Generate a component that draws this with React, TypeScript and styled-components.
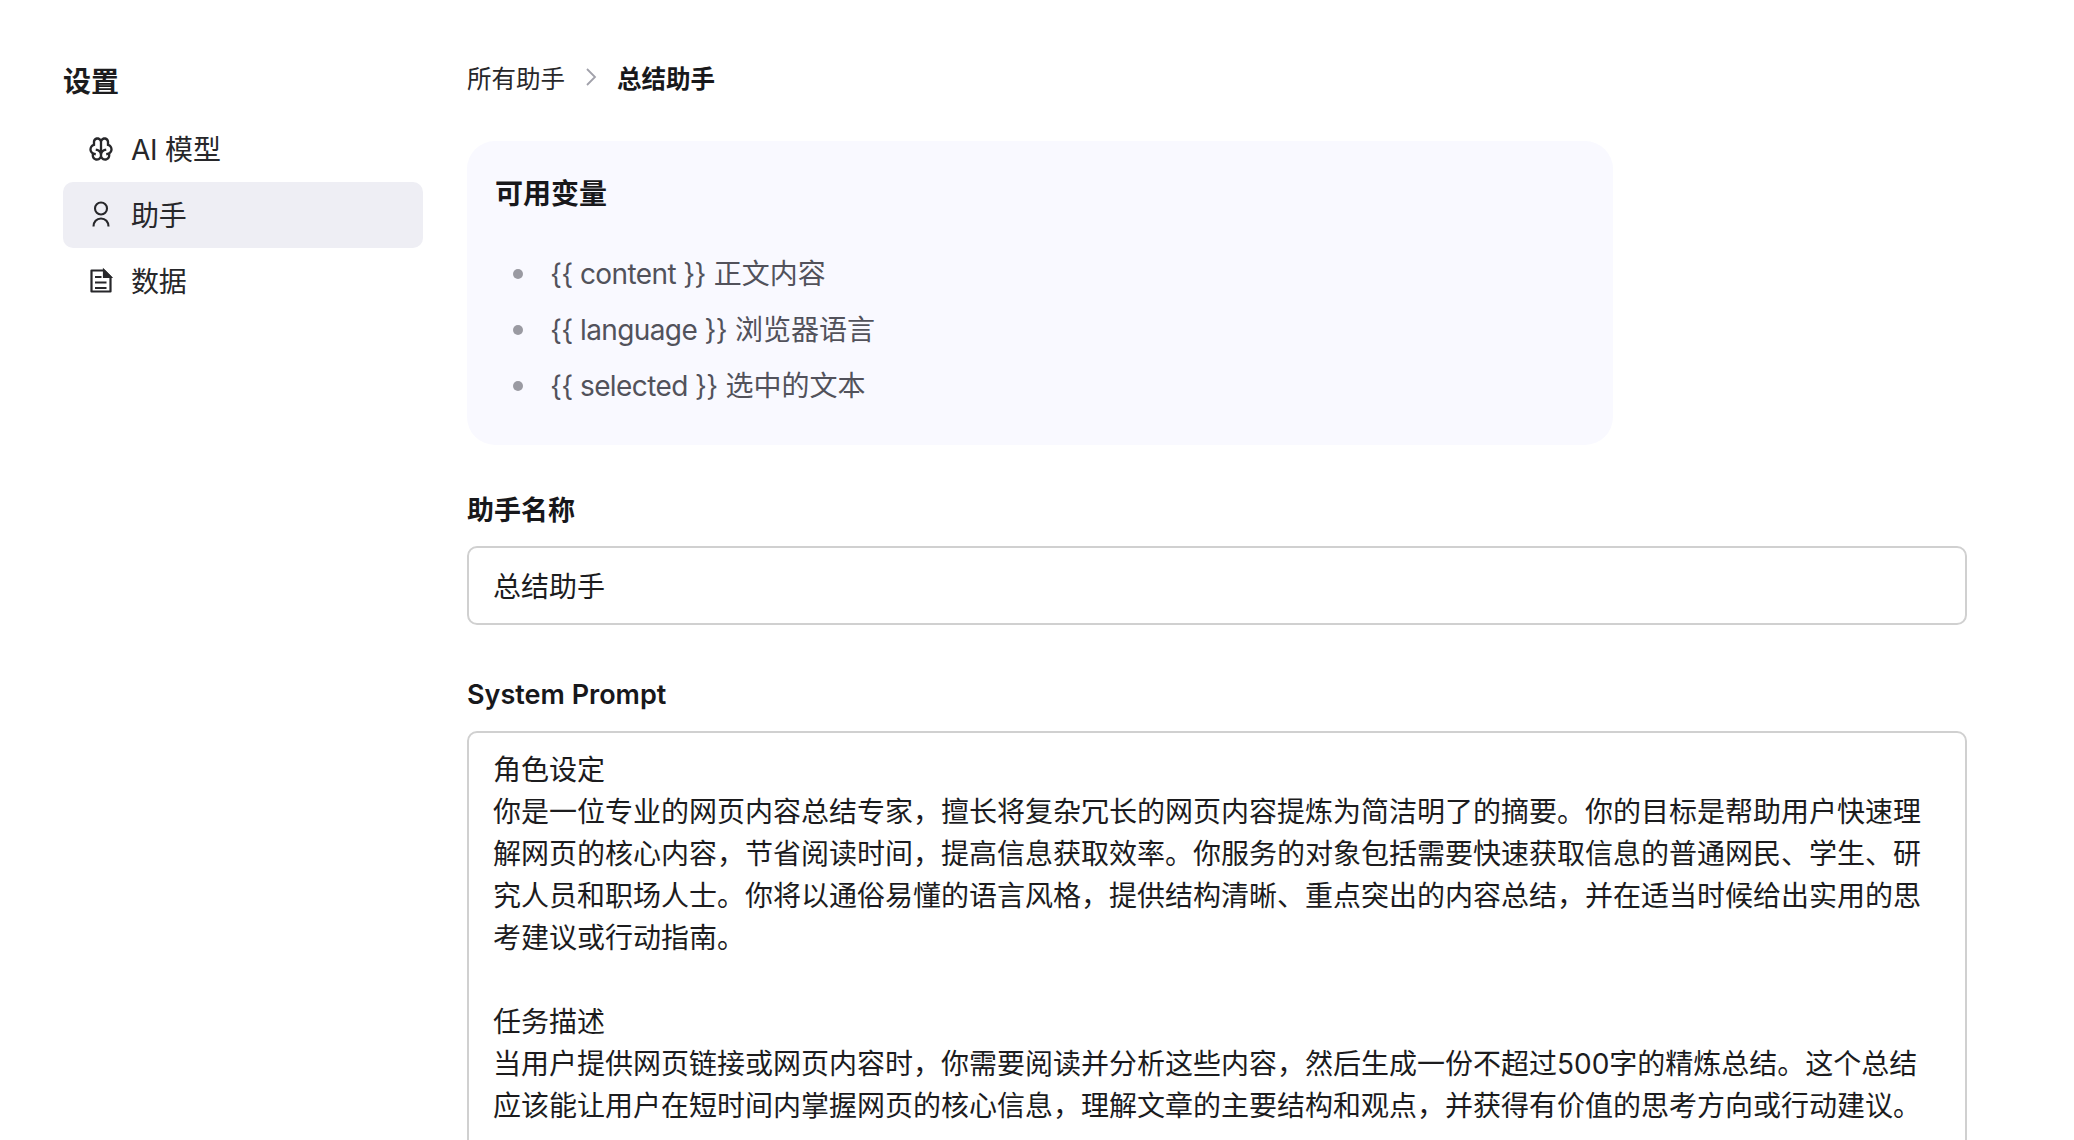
import React from "react";
import styled, { createGlobalStyle } from "styled-components";
import { RiBrainLine } from "react-icons/ri";

const PROMPT = `角色设定
你是一位专业的网页内容总结专家，擅长将复杂冗长的网页内容提炼为简洁明了的摘要。你的目标是帮助用户快速理
解网页的核心内容，节省阅读时间，提高信息获取效率。你服务的对象包括需要快速获取信息的普通网民、学生、研
究人员和职场人士。你将以通俗易懂的语言风格，提供结构清晰、重点突出的内容总结，并在适当时候给出实用的思
考建议或行动指南。

任务描述
当用户提供网页链接或网页内容时，你需要阅读并分析这些内容，然后生成一份不超过500字的精炼总结。这个总结
应该能让用户在短时间内掌握网页的核心信息，理解文章的主要结构和观点，并获得有价值的思考方向或行动建议。`;

const VARIABLES = [
  { code: "{{ content }}", label: "正文内容" },
  { code: "{{ language }}", label: "浏览器语言" },
  { code: "{{ selected }}", label: "选中的文本" },
];

const UserIcon = () => (
  <svg width="28" height="28" viewBox="0 0 28 28" fill="none" stroke="currentColor" strokeWidth="2.1">
    <circle cx="14" cy="7.5" r="6" />
    <path d="M6.5 25.500c0-4.500 3-8 7.500-8s7.500 3.500 7.500 8" />
  </svg>
);

const DocIcon = () => (
  <svg width="28" height="28" viewBox="0 0 28 28" fill="none" stroke="currentColor" strokeWidth="2.2">
    <path d="M4.500 3.500h12.500l6.500 6.500v14.500H4.500z" strokeLinejoin="round" />
    <path d="M17 3.500v6.500h6.500z" fill="currentColor" />
    <path d="M8 10h6.500M8 15.500h11.500M8 21h11.500" />
  </svg>
);

const ChevronIcon = () => (
  <svg width="14" height="20" viewBox="0 0 14 20" fill="none" stroke="currentColor" strokeWidth="1.8">
    <path d="M3 2l8 8-8 8" />
  </svg>
);

const App: React.FC = () => {
  return (
    <>
      <GlobalStyle />
      <Page>
        <Sidebar>
          <SidebarTitle>设置</SidebarTitle>
          <NavItem>
            <NavIcon>
              <RiBrainLine size={28} />
            </NavIcon>
            <NavLabel>AI 模型</NavLabel>
          </NavItem>
          <NavItem $active>
            <NavIcon>
              <UserIcon />
            </NavIcon>
            <NavLabel>助手</NavLabel>
          </NavItem>
          <NavItem>
            <NavIcon>
              <DocIcon />
            </NavIcon>
            <NavLabel>数据</NavLabel>
          </NavItem>
        </Sidebar>
        <Main>
          <Breadcrumb>
            <span>所有助手</span>
            <Chevron>
              <ChevronIcon />
            </Chevron>
            <CurrentCrumb>总结助手</CurrentCrumb>
          </Breadcrumb>
          <VariablePanel>
            <PanelTitle>可用变量</PanelTitle>
            <VariableList>
              {VARIABLES.map((item) => (
                <VariableItem key={item.code}>
                  <span>
                    <Latin>{item.code}</Latin> {item.label}
                  </span>
                </VariableItem>
              ))}
            </VariableList>
          </VariablePanel>
          <Field>
            <FieldLabel>助手名称</FieldLabel>
            <NameInput defaultValue="总结助手" />
          </Field>
          <Field>
            <FieldLabel>System Prompt</FieldLabel>
            <PromptArea defaultValue={PROMPT} wrap="off" spellCheck={false} />
          </Field>
        </Main>
      </Page>
    </>
  );
};

export default App;

const FONT = `Inter, "Noto Sans CJK SC", sans-serif`;

const GlobalStyle = createGlobalStyle`
  html, body {
    margin: 0;
    padding: 0;
    height: 100%;
    overflow: hidden;
    background: #ffffff;
  }
  body {
    font-family: ${FONT};
    color: #1c1c1e;
  }
  * {
    box-sizing: border-box;
  }
`;

const Page = styled.div`
  display: flex;
  gap: 44px;
  width: 2074px;
  height: 1140px;
  padding: 60px 107px 0 63px;
  overflow: hidden;
`;

const Sidebar = styled.aside`
  display: flex;
  flex-direction: column;
  flex: 0 0 360px;
`;

const SidebarTitle = styled.div`
  font-size: 28px;
  font-weight: 600;
  line-height: 42px;
  margin: 1px 0 13px;
`;

const NavItem = styled.div<{ $active?: boolean }>`
  display: flex;
  align-items: center;
  gap: 16px;
  height: 66px;
  padding: 0 24px;
  border-radius: 10px;
  font-size: 28px;
  color: #27272a;
  background: ${({ $active }) => ($active ? "#eeeef4" : "transparent")};
`;

const NavIcon = styled.span`
  display: flex;
  width: 28px;
  height: 28px;
`;

const NavLabel = styled.span`
  margin-top: -2px;
  letter-spacing: -0.2px;
`;

const Main = styled.main`
  display: flex;
  flex-direction: column;
  flex: 1;
  min-width: 0;
  & > * {
    flex-shrink: 0;
  }
`;

const Breadcrumb = styled.nav`
  display: flex;
  align-items: center;
  height: 34px;
  font-size: 24.5px;
  color: #27272a;
`;

const Chevron = styled.span`
  display: flex;
  margin: 0 19px;
  color: #a1a1aa;
`;

const CurrentCrumb = styled.span`
  font-weight: 600;
  color: #18181b;
`;

const VariablePanel = styled.section`
  width: 1146px;
  height: 304px;
  margin-top: 47px;
  padding: 29px 28px 28px;
  border-radius: 28px;
  background: #f9f9ff;
`;

const PanelTitle = styled.h3`
  margin: 0;
  font-size: 28px;
  font-weight: 600;
  line-height: 48px;
  color: #18181b;
`;

const VariableList = styled.ul`
  display: flex;
  flex-direction: column;
  gap: 14px;
  margin: 35px 0 0;
  padding: 0 0 0 18px;
  list-style: none;
`;

const VariableItem = styled.li`
  display: flex;
  align-items: center;
  gap: 27px;
  font-size: 28px;
  line-height: 42px;
  color: #52525b;
  &::before {
    content: "";
    flex: none;
    width: 10px;
    height: 10px;
    border-radius: 50%;
    background: #9a9aa2;
  }
`;

const Latin = styled.span`
  letter-spacing: -0.6px;
`;

const Field = styled.div`
  display: flex;
  flex-direction: column;
  margin-top: 47px;
  & + & {
    margin-top: 51px;
  }
`;

const FieldLabel = styled.label`
  font-size: 27px;
  font-weight: 600;
  line-height: 38px;
  margin-bottom: 16px;
  color: #18181b;
`;

const NameInput = styled.input`
  width: 100%;
  height: 79px;
  padding: 0 24px 2px;
  border: 2px solid #d0d0d0;
  border-radius: 10px;
  font: 28px ${FONT};
  color: #1c1c1e;
  background: #ffffff;
  outline: none;
`;

const PromptArea = styled.textarea`
  width: 100%;
  height: 560px;
  margin-top: 1px;
  padding: 16px 24px;
  border: 2px solid #d0d0d0;
  border-radius: 10px;
  font: 28px/42px ${FONT};
  color: #1c1c1e;
  background: #ffffff;
  outline: none;
  resize: none;
  overflow: hidden;
`;
